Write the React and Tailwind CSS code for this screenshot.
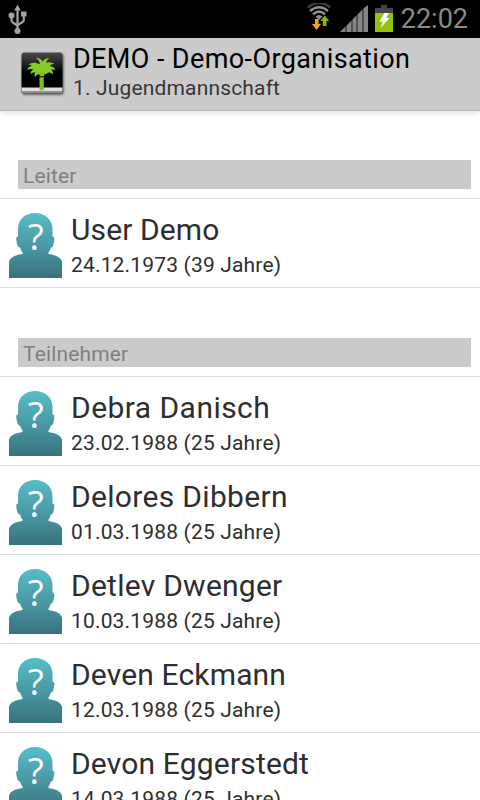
import React from 'react';

const leaders = [
  { name: 'User Demo', info: '24.12.1973 (39 Jahre)', spacing: 'tracking-[0.1px]' },
];

const members = [
  { name: 'Debra Danisch', info: '23.02.1988 (25 Jahre)', spacing: 'tracking-[0.45px]' },
  { name: 'Delores Dibbern', info: '01.03.1988 (25 Jahre)', spacing: 'tracking-[0.32px]' },
  { name: 'Detlev Dwenger', info: '10.03.1988 (25 Jahre)', spacing: 'tracking-[0.25px]' },
  { name: 'Deven Eckmann', info: '12.03.1988 (25 Jahre)', spacing: 'tracking-[0.15px]' },
  { name: 'Devon Eggerstedt', info: '14.03.1988 (25 Jahre)', spacing: 'tracking-[0.17px]' },
];

const UsbIcon = () => (
  <svg width="20" height="32" viewBox="0 0 20 32" fill="none" stroke="#a4a4a4" strokeWidth="2.2">
    <path d="M9.500 6v21" />
    <path d="M3.500 13v4q0 2 2 3l4 2.500" />
    <path d="M15.800 12v5q0 1.500-2 2.500l-4.300 2.500" />
    <path d="M9.500 1.500l3.300 6H6.200z" fill="#a4a4a4" stroke="none" />
    <circle cx="3.500" cy="12.500" r="3" fill="#a4a4a4" stroke="none" />
    <rect x="13" y="8.500" width="5.500" height="5" fill="#a4a4a4" stroke="none" />
    <circle cx="9.500" cy="28" r="3" fill="#a4a4a4" stroke="none" />
  </svg>
);

const WifiIcon = () => (
  <svg width="26" height="30" viewBox="0 0 26 30" fill="none">
    <path d="M.7 4.500Q12-4.500 23.300 4.500" stroke="#3c3c3c" strokeWidth="2.600" />
    <path d="M3 8Q12 .5 21 8" stroke="#8c8c8c" strokeWidth="2.500" />
    <path d="M6 11.300Q12 6 18 11.300" stroke="#8c8c8c" strokeWidth="2.500" />
    <path d="M8.500 13.500Q12 10.500 15.500 13.500L12 17z" fill="#8c8c8c" />
    <path d="M8 16h3.500v5H14l-4.500 6L5 21h3z" fill="#fb9d22" />
    <path d="M17.700 12.500l4.500 5.500h-2.700v5h-3.600v-5h-2.700z" fill="#7fb90c" />
  </svg>
);

const SignalIcon = () => (
  <svg width="28" height="28" viewBox="0 0 28 28" fill="#858585">
    <path d="M0 27l5-5v5z" />
    <path d="M7 20l4-4v11H7z" />
    <path d="M13 14l3-3v16h-3z" />
    <path d="M18 9l4-4v22h-4z" />
    <path d="M24 3l4-3v27h-4z" />
    <path d="M5 22l2-2v7H5zM11 16l2-2v13h-2zM16 11l2-2v18h-2zM22 5l2-2v24h-2z" fill="#505050" />
  </svg>
);

const BatteryIcon = () => (
  <svg width="18" height="28" viewBox="0 0 18 28">
    <path d="M6 0h6v3h6v5H0V3h6z" fill="#464646" />
    <rect y="8" width="18" height="19" fill="#93c506" />
    <path d="M9.500 8h4.500l-3 5h3.500L5.500 23l2.200-6.500H4.500z" fill="#fff" />
  </svg>
);

const AppIcon = () => (
  <svg width="48" height="48" viewBox="0 0 48 48">
    <defs>
      <linearGradient id="tile" x1="0" y1="0" x2="0" y2="1">
        <stop offset="0" stopColor="#4a4a4a" />
        <stop offset=".35" stopColor="#161616" />
        <stop offset=".5" stopColor="#000" />
      </linearGradient>
      <filter id="tileShadow" x="-20%" y="-20%" width="140%" height="140%">
        <feDropShadow dx="1" dy="1.200" stdDeviation="1.200" floodOpacity=".6" />
      </filter>
    </defs>
    <rect x="3.500" y="3.500" width="41" height="41" rx="2.500" fill="url(#tile)" filter="url(#tileShadow)" />
    <path d="M3.500 38.500h41v3.500h-41z" fill="#dedede" />
    <path d="M3.500 42h41q0 2.500-2.500 2.500H6Q3.500 44.500 3.500 42z" fill="#8f8f8f" />
    <path
      d="M22 14Q21 9.500 17.500 8q5.500 0 7 4Q26.500 8 31.500 8.500q-3 1.500-3.500 4.500 4.500-1.500 8.500 1-3.500.5-5 2.300 4.500.7 6 3.700-3-.6-4.500 0 2.500 1.500 2 4.500-2.500-2-5-1.500-1.500 1.500-4 1.500h-4.500q-3-.5-4.500 3-1-3 .3-5-2.800 0-4.800 2 0-3.500 3-5-3.500-.8-6.500.5 1-3 5-4-2.200-1.500-3.500-1.500 6-2.500 9.500-.5z"
      transform="translate(0 .7)"
      fill="#8aca28"
    />
    <path d="M21 23h6l-1 4.300h-4.300z" fill="#7fbf22" />
    <path d="M21.500 28.300h4.300v13h-4.300z" fill="#7fc01c" />
  </svg>
);

const Avatar = () => (
  <svg width="53" height="65" viewBox="0 0 53 65" className="shrink-0 overflow-visible">
    <defs>
      <linearGradient id="person" x1="0" y1="0" x2="0" y2="65" gradientUnits="userSpaceOnUse">
        <stop offset="0" stopColor="#57bdca" />
        <stop offset=".5" stopColor="#4a99a5" />
        <stop offset="1" stopColor="#38727d" />
      </linearGradient>
    </defs>
    <path
      d="M26 0C16 0 9 6.500 9 16v7.500c-1.700.2-2 1.500-1.700 3.500.6 4.500 1.500 7.500 4 7.800.5 2 1 3.400 2.200 4.700v1.500C7 42 2 43.500 0 48.500V65h53V48.500c-2-5-7-6.500-13.500-7.500v-1.500c1.200-1.300 1.700-2.700 2.200-4.700 2.300-.3 3-3.300 3.600-7.800.3-2 0-3.300-1.800-3.500V16C43.500 6.500 36 0 26 0z"
      fill="url(#person)"
    />
    <text x="26.700" y="36.500" textAnchor="middle" fill="#fff" fontSize="37" fontFamily="Open Sans, sans-serif">
      ?
    </text>
  </svg>
);

const SectionHeader = ({ title }) => (
  <div className="flex h-[89px] shrink-0 flex-col justify-end border-b border-[#dedede] pb-[9px] pl-[18px] pr-[9px]">
    <h2 className="h-[29px] bg-[#cbcbcb] pl-[5px] text-[21px] leading-[33px] tracking-[0.15px] text-[#808080]">{title}</h2>
  </div>
);

const PersonRow = ({ person }) => (
  <li className="flex h-[89px] shrink-0 border-b border-[#dedede] pl-[9px] pt-[14px]">
    <Avatar />
    <div className="ml-[9px] whitespace-nowrap text-[#2e2e2e]">
      <div className={`text-[30px] leading-[33px] ${person.spacing}`}>{person.name}</div>
      <div className="mt-0.5 text-[21px] leading-[35px] tracking-[0.17px]">{person.info}</div>
    </div>
  </li>
);

const App = () => {
  return (
    <div className="flex h-[800px] w-[480px] flex-col overflow-hidden bg-white font-['Roboto',sans-serif]">
      <div className="flex h-[38px] shrink-0 items-start bg-black pl-2 pt-[3px]">
        <UsbIcon />
        <div className="ml-auto flex items-start pr-[12px]">
          <WifiIcon />
          <div className="ml-[7px] mt-[2px]"><SignalIcon /></div>
          <div className="ml-[7px] mt-[2px]"><BatteryIcon /></div>
          <span className="ml-[8px] text-[27px] leading-[32px] text-[#8a8a8a]">22:02</span>
        </div>
      </div>

      <header className="z-10 flex h-[73px] shrink-0 border-b border-[#b8b8b8] bg-[#cbcbcb] pl-[18px] pt-[11px] shadow-[0_2px_6px_rgba(0,0,0,0.12)]">
        <AppIcon />
        <div className="-mt-[6px] ml-[7px] whitespace-nowrap">
          <h1 className="text-[27px] leading-[32px] tracking-[0.4px] text-black">DEMO - Demo-Organisation</h1>
          <div className="text-[21px] leading-[26px] tracking-[0.16px] text-[#373737]">1. Jugendmannschaft</div>
        </div>
      </header>

      <main className="-mt-px flex min-h-0 flex-1 flex-col">
        <SectionHeader title="Leiter" />
        <ul>
          {leaders.map((person) => (
            <PersonRow key={person.name} person={person} />
          ))}
        </ul>
        <SectionHeader title="Teilnehmer" />
        <ul>
          {members.map((person) => (
            <PersonRow key={person.name} person={person} />
          ))}
        </ul>
      </main>
    </div>
  );
};

export default App;
